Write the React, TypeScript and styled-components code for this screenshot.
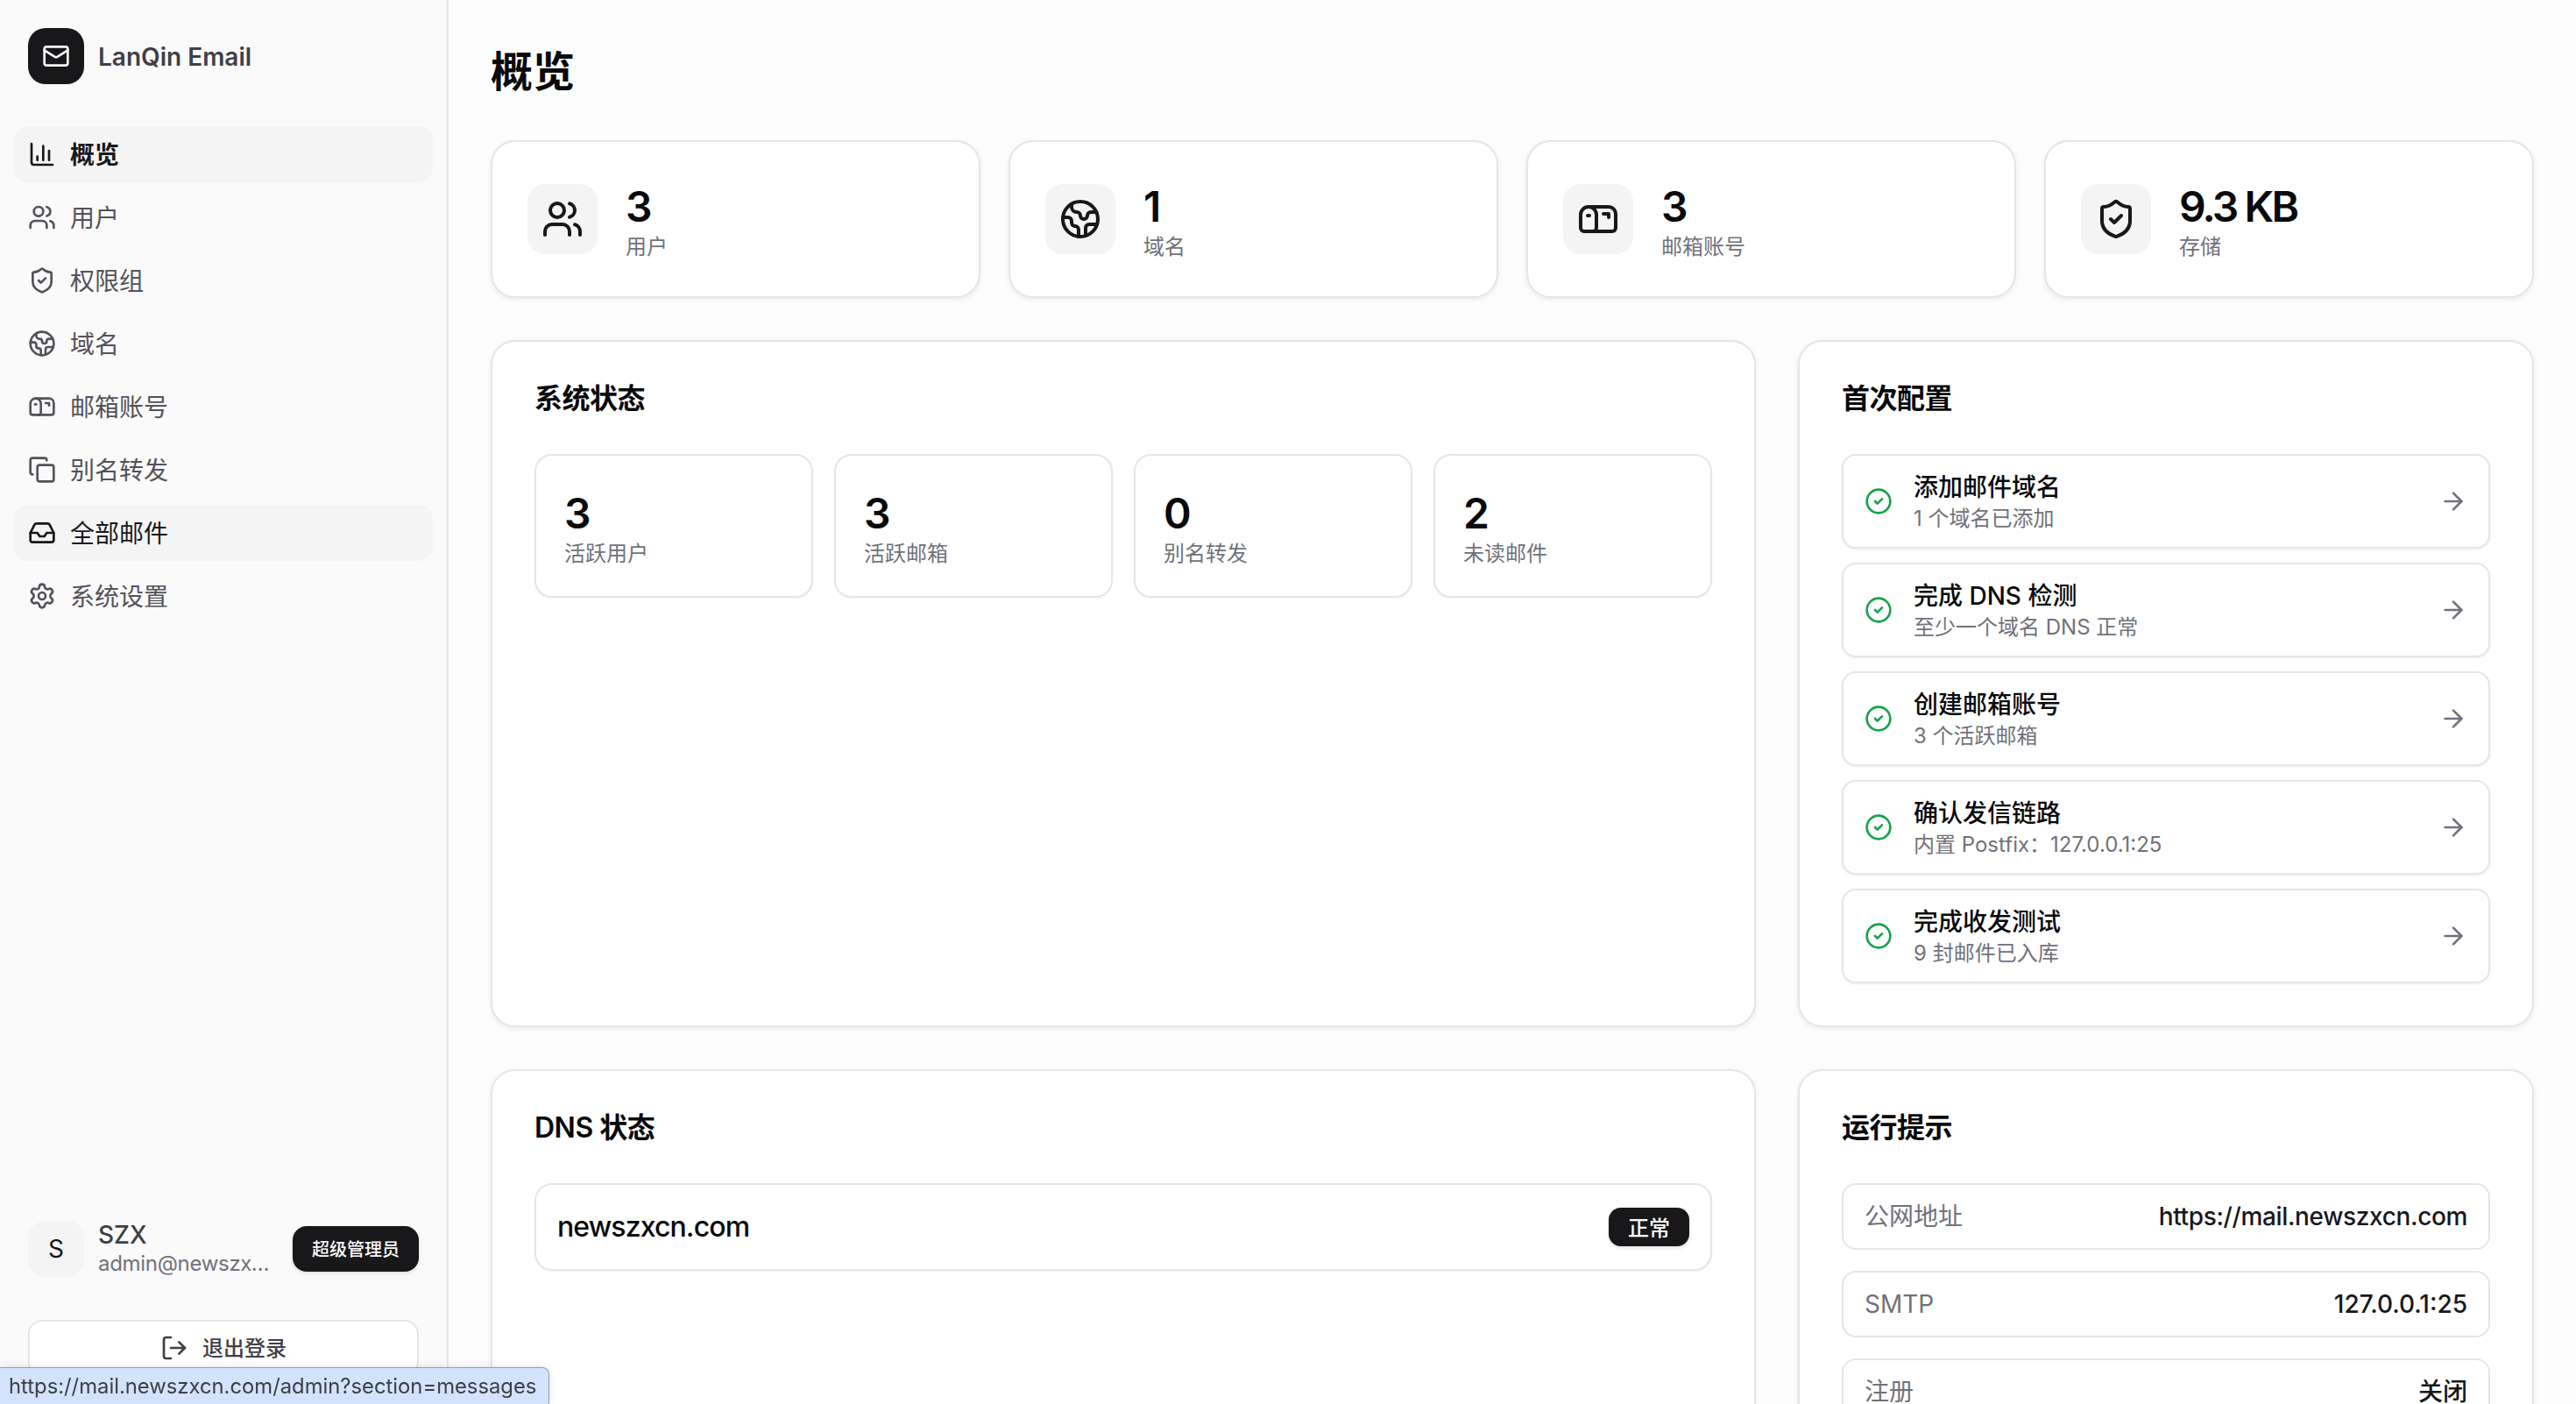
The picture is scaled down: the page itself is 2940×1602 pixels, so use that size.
import styled, { createGlobalStyle } from 'styled-components';
import {
    ArrowRight,
    ChartColumn,
    CircleCheck,
    Copy,
    Earth,
    Inbox,
    LogOut,
    Mail,
    Mailbox,
    Settings,
    ShieldCheck,
    Users,
} from 'lucide-react';

const GlobalStyle = createGlobalStyle`
    html, body, #root {
        margin: 0;
        height: 100%;
    }
    body {
        font-family: Inter, "Noto Sans CJK SC", "Liberation Sans", sans-serif;
        color: #09090b;
        background: #fdfdfd;
        overflow: hidden;
    }
    * {
        box-sizing: border-box;
    }
`;

const Styles = {
    Shell: styled.div`
        display: flex;
        height: 1602px;
        overflow: hidden;
    `,
    Sidebar: styled.aside`
        display: flex;
        flex-direction: column;
        flex: none;
        width: 512px;
        height: 100%;
        background: #fafafa;
        border-right: 2px solid #e5e5e5;
    `,
    Brand: styled.div`
        display: flex;
        align-items: center;
        gap: 16px;
        padding: 32px 32px 48px;
    `,
    BrandMark: styled.div`
        display: flex;
        align-items: center;
        justify-content: center;
        width: 64px;
        height: 64px;
        border-radius: 20px;
        background: #18181b;
        color: #fafafa;
    `,
    BrandName: styled.span`
        padding-top: 2px;
        font-size: 28px;
        font-weight: 600;
        color: #3f3f46;
    `,
    Nav: styled.nav`
        display: flex;
        flex-direction: column;
        gap: 8px;
        padding: 0 16px;
    `,
    NavItem: styled.div<{ $active?: boolean; $hover?: boolean }>`
        display: flex;
        align-items: center;
        gap: 16px;
        height: 64px;
        padding: 0 16px;
        border-radius: 16px;
        font-size: 28px;
        font-weight: ${(p) => (p.$active ? 600 : 400)};
        color: ${(p) => (p.$active || p.$hover ? '#18181b' : '#52525b')};
        background: ${(p) => (p.$active || p.$hover ? '#f4f4f5' : 'transparent')};
    `,
    CjkLabel: styled.span`
        padding-bottom: 3px;
    `,
    Footer: styled.div`
        display: flex;
        flex-direction: column;
        gap: 48px;
        margin-top: auto;
        padding: 0 32px 32px;
    `,
    UserRow: styled.div`
        display: flex;
        align-items: center;
        gap: 16px;
    `,
    Avatar: styled.div`
        display: flex;
        flex: none;
        align-items: center;
        justify-content: center;
        width: 64px;
        height: 64px;
        border-radius: 20px;
        background: #f4f4f5;
        font-size: 28px;
        color: #18181b;
    `,
    UserText: styled.div`
        flex: 1;
        min-width: 0;
    `,
    UserName: styled.div`
        font-size: 28px;
        line-height: 34px;
        font-weight: 500;
        color: #3f3f46;
    `,
    UserMail: styled.div`
        font-size: 24px;
        line-height: 32px;
        letter-spacing: -0.3px;
        color: #71717a;
        white-space: nowrap;
        overflow: hidden;
        text-overflow: ellipsis;
    `,
    RoleBadge: styled.span`
        flex: none;
        display: flex;
        align-items: center;
        justify-content: center;
        width: 144px;
        height: 52px;
        padding-bottom: 2px;
        border-radius: 16px;
        background: #18181b;
        color: #fafafa;
        font-size: 20px;
        font-weight: 500;
        box-shadow: 0 2px 4px rgba(0, 0, 0, 0.12);
    `,
    LogoutButton: styled.button`
        display: flex;
        align-items: center;
        justify-content: center;
        gap: 16px;
        height: 64px;
        border: 2px solid #e5e5e5;
        border-radius: 16px;
        background: #fff;
        font: inherit;
        font-size: 24px;
        font-weight: 500;
        color: #3f3f46;
    `,
    Main: styled.main`
        flex: 1;
        min-width: 0;
        padding: 48px;
        overflow: hidden;
    `,
    Title: styled.h1`
        margin: 0 0 46px;
        padding-top: 2px;
        font-size: 48px;
        line-height: 64px;
        font-weight: 600;
    `,
    StatGrid: styled.div`
        display: grid;
        grid-template-columns: repeat(4, 1fr);
        gap: 32px;
        margin-bottom: 48px;
    `,
    StatCard: styled.div`
        display: flex;
        align-items: center;
        gap: 32px;
        padding: 40px;
        border: 2px solid #e5e5e5;
        border-radius: 28px;
        background: #fff;
        box-shadow: 0 2px 6px rgba(0, 0, 0, 0.08);
    `,
    StatIcon: styled.div`
        display: flex;
        align-items: center;
        justify-content: center;
        width: 80px;
        height: 80px;
        border-radius: 20px;
        background: #f4f4f5;
        color: #18181b;
    `,
    Value: styled.div`
        padding-top: 2px;
        margin-bottom: -2px;
        font-size: 48px;
        line-height: 64px;
        font-weight: 600;
        letter-spacing: -0.06em;
    `,
    Label: styled.div`
        font-size: 24px;
        line-height: 32px;
        color: #71717a;
    `,
    PanelGrid: styled.div`
        display: grid;
        grid-template-columns: 1fr 840px;
        gap: 48px;
    `,
    Panel: styled.section`
        padding: 48px;
        border: 2px solid #e5e5e5;
        border-radius: 28px;
        background: #fff;
        box-shadow: 0 2px 6px rgba(0, 0, 0, 0.08);
    `,
    PanelTitle: styled.h2`
        margin: 0 0 46px;
        font-size: 32px;
        line-height: 34px;
        font-weight: 600;
        letter-spacing: -0.5px;
    `,
    MiniGrid: styled.div`
        display: grid;
        grid-template-columns: repeat(4, 1fr);
        gap: 24px;
    `,
    MiniCard: styled.div`
        padding: 32px;
        border: 2px solid #e5e5e5;
        border-radius: 20px;
        background: #fff;
        box-shadow: 0 1px 2px rgba(0, 0, 0, 0.05);
    `,
    SetupList: styled.div`
        display: flex;
        flex-direction: column;
        gap: 16px;
    `,
    SetupItem: styled.div`
        display: flex;
        align-items: center;
        gap: 24px;
        padding: 16px 24px;
        border: 2px solid #e5e5e5;
        border-radius: 16px;
        background: #fff;
        box-shadow: 0 1px 3px rgba(0, 0, 0, 0.08);
    `,
    SetupText: styled.div`
        flex: 1;
        min-width: 0;
    `,
    SetupTitle: styled.div`
        font-size: 28px;
        line-height: 40px;
        font-weight: 500;
    `,
    SetupArrow: styled.span`
        display: flex;
        color: #71717a;
    `,
    SetupCheck: styled.span`
        display: flex;
        color: #16a34a;
    `,
    DnsRow: styled.div`
        display: flex;
        align-items: center;
        justify-content: space-between;
        padding: 24px;
        border: 2px solid #e5e5e5;
        border-radius: 20px;
        background: #fff;
        box-shadow: 0 1px 2px rgba(0, 0, 0, 0.05);
    `,
    DnsName: styled.span`
        font-size: 32px;
        line-height: 48px;
        font-weight: 500;
        letter-spacing: -0.9px;
    `,
    OkBadge: styled.span`
        display: flex;
        align-items: center;
        justify-content: center;
        width: 92px;
        height: 44px;
        padding-bottom: 2px;
        border-radius: 14px;
        background: #18181b;
        color: #fafafa;
        font-size: 24px;
        font-weight: 500;
        box-shadow: 0 2px 4px rgba(0, 0, 0, 0.12);
    `,
    HintList: styled.div`
        display: flex;
        flex-direction: column;
        gap: 24px;
    `,
    HintRow: styled.div`
        display: flex;
        align-items: center;
        justify-content: space-between;
        padding: 16px 24px;
        border: 2px solid #e5e5e5;
        border-radius: 16px;
        background: #fff;
        font-size: 28px;
        line-height: 40px;
    `,
    HintLabel: styled.span`
        color: #71717a;
    `,
    HintValue: styled.span<{ $tight?: boolean }>`
        font-weight: 500;
        color: #18181b;
        letter-spacing: ${(p) => (p.$tight ? '-0.36px' : '0')};
    `,
    StatusBubble: styled.div`
        position: fixed;
        left: 0;
        bottom: 0;
        display: flex;
        align-items: center;
        height: 42px;
        padding: 0 14px 0 10px;
        border: 1px solid #9a9ca3;
        border-left: 0;
        border-bottom: 0;
        border-top-right-radius: 8px;
        background: #d3e3fd;
        color: #3c4043;
        font-size: 23.8px;
        white-space: nowrap;
        box-shadow: 0 0 8px rgba(0, 0, 0, 0.12);
    `,
};

const NAV = [
    { label: '概览', icon: ChartColumn, active: true },
    { label: '用户', icon: Users },
    { label: '权限组', icon: ShieldCheck },
    { label: '域名', icon: Earth },
    { label: '邮箱账号', icon: Mailbox },
    { label: '别名转发', icon: Copy },
    { label: '全部邮件', icon: Inbox, hover: true },
    { label: '系统设置', icon: Settings },
];

const STATS = [
    { value: '3', label: '用户', icon: Users },
    { value: '1', label: '域名', icon: Earth },
    { value: '3', label: '邮箱账号', icon: Mailbox },
    { value: '9.3 KB', label: '存储', icon: ShieldCheck },
];

const SYSTEM = [
    { value: '3', label: '活跃用户' },
    { value: '3', label: '活跃邮箱' },
    { value: '0', label: '别名转发' },
    { value: '2', label: '未读邮件' },
];

const SETUP = [
    { title: '添加邮件域名', sub: '1 个域名已添加' },
    { title: '完成 DNS 检测', sub: '至少一个域名 DNS 正常' },
    { title: '创建邮箱账号', sub: '3 个活跃邮箱' },
    { title: '确认发信链路', sub: '内置 Postfix：127.0.0.1:25' },
    { title: '完成收发测试', sub: '9 封邮件已入库' },
];

const HINTS = [
    { label: '公网地址', value: 'https://mail.newszxcn.com', tight: true },
    { label: 'SMTP', value: '127.0.0.1:25' },
    { label: '注册', value: '关闭' },
];

export default function App() {
    return (
        <>
            <GlobalStyle />
            <Styles.Shell>
                <Styles.Sidebar>
                    <Styles.Brand>
                        <Styles.BrandMark>
                            <Mail size={32} />
                        </Styles.BrandMark>
                        <Styles.BrandName>LanQin Email</Styles.BrandName>
                    </Styles.Brand>
                    <Styles.Nav>
                        {NAV.map((item) => (
                            <Styles.NavItem key={item.label} $active={item.active} $hover={item.hover}>
                                <item.icon size={32} />
                                <Styles.CjkLabel>{item.label}</Styles.CjkLabel>
                            </Styles.NavItem>
                        ))}
                    </Styles.Nav>
                    <Styles.Footer>
                        <Styles.UserRow>
                            <Styles.Avatar>S</Styles.Avatar>
                            <Styles.UserText>
                                <Styles.UserName>SZX</Styles.UserName>
                                <Styles.UserMail>admin@newszxcn.com</Styles.UserMail>
                            </Styles.UserText>
                            <Styles.RoleBadge>超级管理员</Styles.RoleBadge>
                        </Styles.UserRow>
                        <Styles.LogoutButton>
                            <LogOut size={32} />
                            <Styles.CjkLabel>退出登录</Styles.CjkLabel>
                        </Styles.LogoutButton>
                    </Styles.Footer>
                </Styles.Sidebar>

                <Styles.Main>
                    <Styles.Title>概览</Styles.Title>
                    <Styles.StatGrid>
                        {STATS.map((stat) => (
                            <Styles.StatCard key={stat.label}>
                                <Styles.StatIcon>
                                    <stat.icon size={48} />
                                </Styles.StatIcon>
                                <div>
                                    <Styles.Value>{stat.value}</Styles.Value>
                                    <Styles.Label>{stat.label}</Styles.Label>
                                </div>
                            </Styles.StatCard>
                        ))}
                    </Styles.StatGrid>

                    <Styles.PanelGrid>
                        <Styles.Panel>
                            <Styles.PanelTitle>系统状态</Styles.PanelTitle>
                            <Styles.MiniGrid>
                                {SYSTEM.map((stat) => (
                                    <Styles.MiniCard key={stat.label}>
                                        <Styles.Value>{stat.value}</Styles.Value>
                                        <Styles.Label>{stat.label}</Styles.Label>
                                    </Styles.MiniCard>
                                ))}
                            </Styles.MiniGrid>
                        </Styles.Panel>

                        <Styles.Panel>
                            <Styles.PanelTitle>首次配置</Styles.PanelTitle>
                            <Styles.SetupList>
                                {SETUP.map((step) => (
                                    <Styles.SetupItem key={step.title}>
                                        <Styles.SetupCheck>
                                            <CircleCheck size={32} />
                                        </Styles.SetupCheck>
                                        <Styles.SetupText>
                                            <Styles.SetupTitle>{step.title}</Styles.SetupTitle>
                                            <Styles.Label>{step.sub}</Styles.Label>
                                        </Styles.SetupText>
                                        <Styles.SetupArrow>
                                            <ArrowRight size={32} />
                                        </Styles.SetupArrow>
                                    </Styles.SetupItem>
                                ))}
                            </Styles.SetupList>
                        </Styles.Panel>

                        <Styles.Panel>
                            <Styles.PanelTitle>DNS 状态</Styles.PanelTitle>
                            <Styles.DnsRow>
                                <Styles.DnsName>newszxcn.com</Styles.DnsName>
                                <Styles.OkBadge>正常</Styles.OkBadge>
                            </Styles.DnsRow>
                        </Styles.Panel>

                        <Styles.Panel>
                            <Styles.PanelTitle>运行提示</Styles.PanelTitle>
                            <Styles.HintList>
                                {HINTS.map((hint) => (
                                    <Styles.HintRow key={hint.label}>
                                        <Styles.HintLabel>{hint.label}</Styles.HintLabel>
                                        <Styles.HintValue $tight={hint.tight}>{hint.value}</Styles.HintValue>
                                    </Styles.HintRow>
                                ))}
                            </Styles.HintList>
                        </Styles.Panel>
                    </Styles.PanelGrid>
                </Styles.Main>
            </Styles.Shell>
            <Styles.StatusBubble>https://mail.newszxcn.com/admin?section=messages</Styles.StatusBubble>
        </>
    );
}
